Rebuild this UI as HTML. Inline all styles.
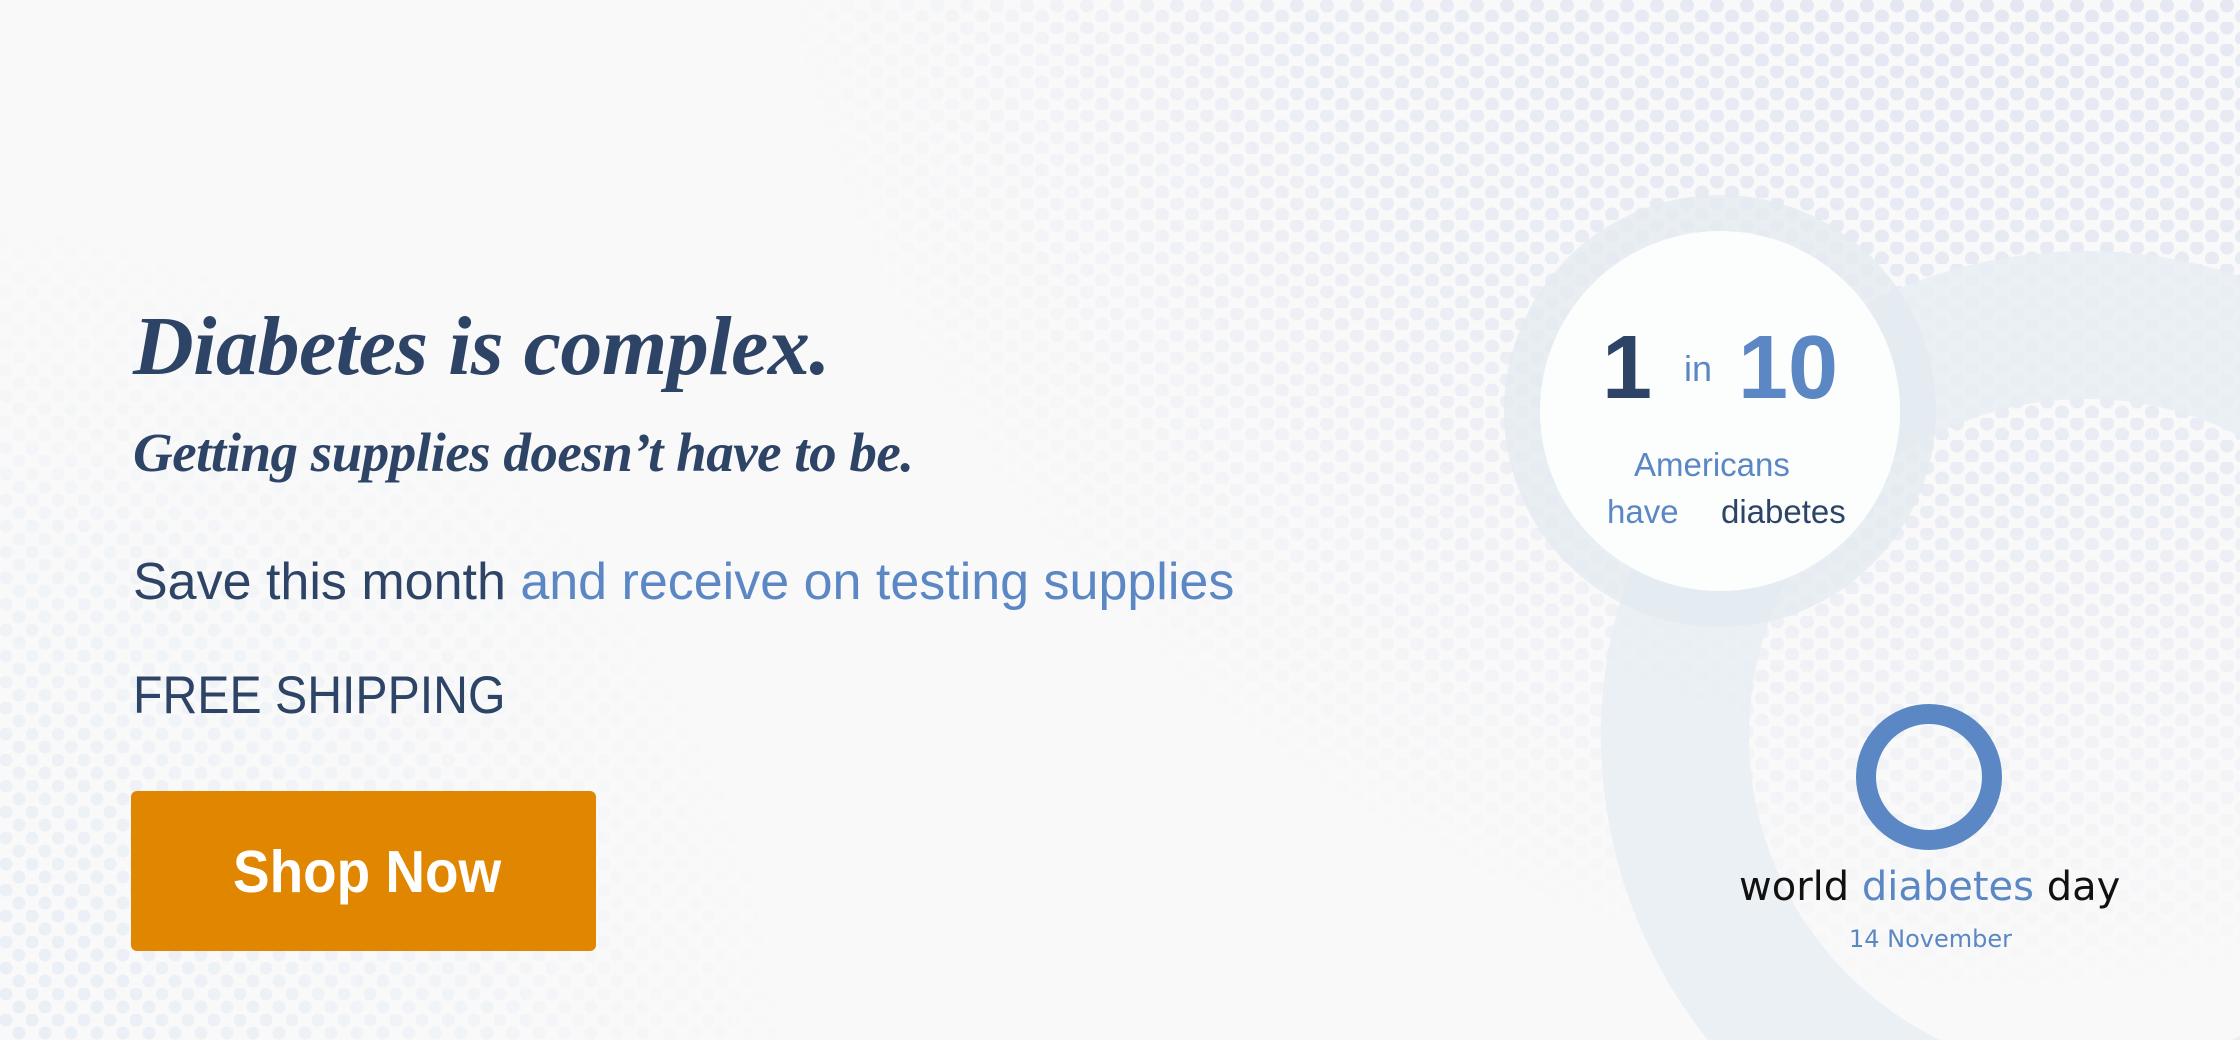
<!DOCTYPE html>
<html><head><meta charset="utf-8"><style>
html,body{margin:0;padding:0;overflow:hidden}
body{width:2240px;height:1040px;background:#f9f9f9;position:relative;overflow:hidden;font-family:"Liberation Sans",sans-serif}
.abs{position:absolute;white-space:nowrap}
</style></head><body>
<svg class="abs" style="left:0;top:0" width="2240" height="1040" viewBox="0 0 2240 1040">
<defs>
<pattern id="p1" width="30" height="22" patternUnits="userSpaceOnUse">
<circle cx="7" cy="5.5" r="7" fill="#e4e7f2"/><circle cx="22" cy="16.5" r="7" fill="#e4e7f2"/>
</pattern>
<pattern id="p2" width="26" height="26" patternUnits="userSpaceOnUse">
<circle cx="6" cy="6" r="6.5" fill="#e8eef5"/><circle cx="19" cy="19" r="6.5" fill="#e8eef5"/>
</pattern>
<radialGradient id="g1" cx="2000" cy="-250" r="1250" gradientUnits="userSpaceOnUse">
<stop offset="0.2" stop-color="#fff" stop-opacity="1"/><stop offset="0.6" stop-color="#fff" stop-opacity="0.7"/><stop offset="1" stop-color="#fff" stop-opacity="0"/>
</radialGradient>
<radialGradient id="g2" cx="-100" cy="1100" r="900" gradientUnits="userSpaceOnUse">
<stop offset="0.1" stop-color="#fff" stop-opacity="1"/><stop offset="0.6" stop-color="#fff" stop-opacity="0.5"/><stop offset="1" stop-color="#fff" stop-opacity="0"/>
</radialGradient>
<mask id="m1"><rect width="2240" height="1040" fill="url(#g1)"/></mask>
<mask id="m2"><rect width="2240" height="1040" fill="url(#g2)"/></mask>
</defs>
<rect width="2240" height="1040" fill="url(#p1)" mask="url(#m1)"/>
<rect width="2240" height="1040" fill="url(#p2)" mask="url(#m2)"/>
<circle cx="2086" cy="736" r="411" fill="none" stroke="#e9eef4" stroke-opacity="0.85" stroke-width="148"/>
<circle cx="1720" cy="411" r="198" fill="none" stroke="#e4ebf0" stroke-opacity="0.8" stroke-width="36"/>
<circle cx="1720" cy="411" r="180" fill="#fcfdfd"/>
<circle cx="1929" cy="777" r="63" fill="none" stroke="#5b87c5" stroke-width="20"/>
</svg>

<div class="abs" style="left:133px;top:298px;font-family:'Liberation Serif',serif;font-style:italic;font-weight:bold;font-size:84px;color:#2e4466;letter-spacing:-0.5px">Diabetes is complex.</div>
<div class="abs" style="left:133px;top:421px;font-family:'Liberation Serif',serif;font-style:italic;font-weight:bold;font-size:55px;color:#2e4466;letter-spacing:-0.5px">Getting supplies doesn’t have to be.</div>
<div class="abs" style="left:133px;top:552px;font-size:52px;color:#2e4466">Save this month <span style="color:#5b87c5">and receive on testing supplies</span></div>
<div class="abs" style="left:133px;top:665px;font-size:53px;color:#2e4466;transform:scaleX(0.91);transform-origin:left top">FREE SHIPPING</div>
<div class="abs" style="left:131px;top:791px;width:465px;height:160px;background:#e08600;border-radius:6px"></div>
<div class="abs" style="left:233px;top:838px;font-size:59px;font-weight:bold;color:#fff;transform:scaleX(0.93);transform-origin:left top">Shop Now</div>

<div class="abs" style="left:1602px;top:317px;font-size:90px;font-weight:bold;color:#2e4466">1</div>
<div class="abs" style="left:1684px;top:348px;font-size:36px;color:#5b87c5">in</div>
<div class="abs" style="left:1738px;top:317px;font-size:90px;font-weight:bold;color:#5b87c5">10</div>
<div class="abs" style="left:1634px;top:446px;font-size:33px;color:#5b87c5">Americans</div>
<div class="abs" style="left:1607px;top:493px;font-size:33px;color:#5b87c5">have</div>
<div class="abs" style="left:1721px;top:493px;font-size:33px;color:#2e4466">diabetes</div>

<div class="abs" style="left:1739px;top:864px;font-family:'DejaVu Sans',sans-serif;font-size:40px;color:#111">world <span style="color:#5b87c5">diabetes</span> day</div>
<div class="abs" style="left:1849px;top:925px;font-family:'DejaVu Sans',sans-serif;font-size:24px;color:#5b87c5">14 November</div>
</body></html>
